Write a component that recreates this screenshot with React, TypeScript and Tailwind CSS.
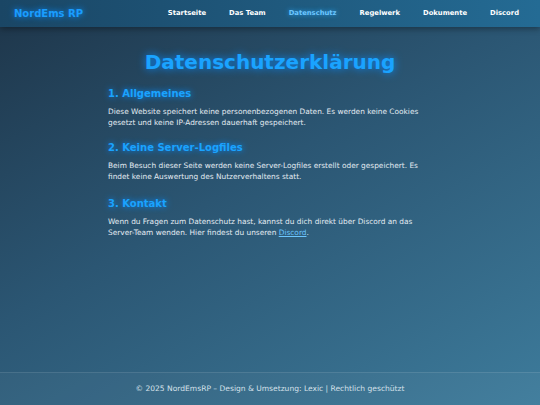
import React from 'react';

const navItems = ['Startseite', 'Das Team', 'Datenschutz', 'Regelwerk', 'Dokumente', 'Discord'];

const sections = [
  {
    title: '1. Allgemeines',
    text: 'Diese Website speichert keine personenbezogenen Daten. Es werden keine Cookies gesetzt und keine IP-Adressen dauerhaft gespeichert.',
  },
  {
    title: '2. Keine Server-Logfiles',
    text: 'Beim Besuch dieser Seite werden keine Server-Logfiles erstellt oder gespeichert. Es findet keine Auswertung des Nutzerverhaltens statt.',
  },
];

const App: React.FC = () => {
  return (
    <div className="min-h-screen flex flex-col bg-[linear-gradient(150deg,#1e3549_0%,#2b5673_45%,#3d7b9b_100%)] font-['DejaVu_Sans',Verdana,sans-serif] text-[#e3ebf2]">
      <header className="h-[27px] flex items-center justify-between pl-[14px] pr-[21px] bg-[linear-gradient(90deg,#1a4665,#246b94)] shadow-[0_2px_6px_rgba(0,0,0,0.35)]">
        <div className="text-[10px] font-bold text-[#1a9dff] [text-shadow:0_0_6px_#0a8cff]">NordEms RP</div>
        <nav className="flex items-center gap-[23px]">
          {navItems.map((item) => (
            <a
              key={item}
              className={
                item === 'Datenschutz'
                  ? 'text-[6.8px] font-bold text-[#6cc6ff] [text-shadow:0_0_5px_#2aa8ff]'
                  : 'text-[6.8px] font-bold text-white'
              }
            >
              {item}
            </a>
          ))}
        </nav>
      </header>

      <main className="flex-1 w-[324px] mx-auto pt-[22px]">
        <h1 className="text-center text-[20px] font-bold text-[#1aa3ff] [text-shadow:0_0_8px_#0a8cff] leading-[26px]">
          Datenschutzerklärung
        </h1>

        {sections.map((s, i) => (
          <section key={s.title} className={i === 0 ? 'mt-[12px]' : 'mt-[13px]'}>
            <h2 className="text-[10px] font-bold text-[#1aa3ff] [text-shadow:0_0_6px_#0a8cff] leading-[14px]">
              {s.title}
            </h2>
            <p className="mt-[5px] text-[7.4px] leading-[11px]">{s.text}</p>
          </section>
        ))}

        <section className="mt-[15px]">
          <h2 className="text-[10px] font-bold text-[#1aa3ff] [text-shadow:0_0_6px_#0a8cff] leading-[14px]">
            3. Kontakt
          </h2>
          <p className="mt-[5px] text-[7.4px] leading-[11px]">
            Wenn du Fragen zum Datenschutz hast, kannst du dich direkt über Discord an das Server-Team wenden. Hier findest du unseren <a className="text-[#6cc6ff] underline">Discord</a>.
          </p>
        </section>
      </main>

      <footer className="h-[33px] flex items-center justify-center border-t border-[#ffffff1a] bg-[#ffffff08] text-[7.55px] text-[#d6e1ea]">
        © 2025 NordEmsRP – Design &amp; Umsetzung: Lexic | Rechtlich geschützt
      </footer>
    </div>
  );
};

export default App;
